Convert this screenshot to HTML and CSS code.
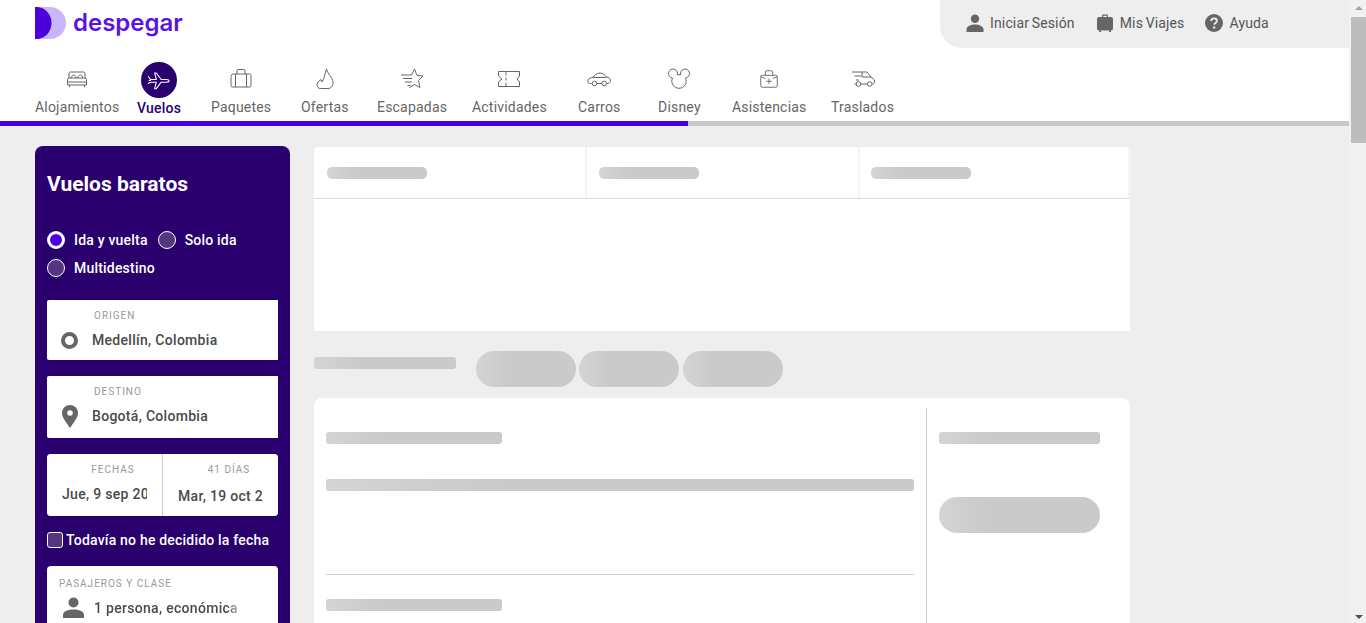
FILE: index.html
```html
<!DOCTYPE html>
<html lang="es">
<head>
    <meta charset="UTF-8">
    <meta name="viewport" content="width=device-width, initial-scale=1.0">
    <title>Vuelos baratos - Despegar</title>
    <link rel="stylesheet" href="styles.css">
</head>
<body>
<div class="page">
    <div class="content">
        <header class="top">
            <div class="logo">
                <svg width="32" height="32" viewBox="0 0 32 32">
                    <path d="M0 0h15a16 16 0 0 1 0 32H0z" fill="#c9b6f8"/>
                    <path d="M0 0h3c8 1 13.500 8 13.500 16S11 31 3 32H0z" fill="#4b00dc"/>
                </svg>
                <span class="logo-text">despegar</span>
            </div>
            <div class="user-menu">
                <a class="user-link">
                    <svg width="18" height="18" viewBox="0 0 18 18" fill="#666"><circle cx="9" cy="4.800" r="4.200"/><path d="M0.500 18v-2.500C0.500 12 5 10.500 9 10.500s8.500 1.500 8.500 5V18z"/></svg>
                    Iniciar Sesión
                </a>
                <a class="user-link">
                    <svg width="18" height="18" viewBox="0 0 18 18" fill="#666"><path d="M6 3V1.500C6 .8 6.500.5 7 .5h4c.5 0 1 .3 1 1V3h-1.200V1.700H7.200V3z"/><rect x="1" y="3" width="16" height="13.500" rx="2"/><path d="M3 16.500h2V18H3zM13 16.500h2V18h-2z"/></svg>
                    Mis Viajes
                </a>
                <a class="user-link">
                    <svg width="18" height="18" viewBox="0 0 18 18"><circle cx="9" cy="9" r="9" fill="#666"/><path d="M6.200 7c0-1.700 1.300-2.700 2.900-2.700 1.500 0 2.800.9 2.800 2.400 0 2.200-2.600 2.200-2.600 4" fill="none" stroke="#eee" stroke-width="1.800"/><circle cx="9.200" cy="13.400" r="1.200" fill="#eee"/></svg>
                    Ayuda
                </a>
            </div>
        </header>

        <nav class="products">
            <a class="product">
                <span class="product-icon">
                    <svg width="24" height="24" viewBox="0 0 24 24"><path d="M4 11V6.500A1.500 1.500 0 0 1 5.500 5h13A1.500 1.500 0 0 1 20 6.500V11M2.500 12.500A1.500 1.500 0 0 1 4 11h16a1.500 1.500 0 0 1 1.500 1.500V18h-19zM2.500 15h19M4.500 18v2M19.500 18v2M6.500 11c0-4 4.500-4 4.500 0M13 11c0-4 4.500-4 4.500 0"/></svg>
                </span>
                <span class="product-name">Alojamientos</span>
            </a>
            <a class="product active">
                <span class="product-icon">
                    <svg width="26" height="26" viewBox="0 0 24 24"><path d="M2 8.500l2 3h5.500L8 5.500h1.500l4.500 6h5c3 0 3 2.500 0 2.500h-5L9.500 20H8l1.500-6H4l-2 1.500M2.500 12.500h2"/></svg>
                </span>
                <span class="product-name">Vuelos</span>
            </a>
            <a class="product">
                <span class="product-icon">
                    <svg width="24" height="24" viewBox="0 0 24 24"><path d="M4 7h16.500A1.500 1.500 0 0 1 22 8.500v10a1.500 1.500 0 0 1-1.500 1.500h-17A1.500 1.500 0 0 1 2 18.500v-9A2.500 2.500 0 0 1 4 7zM8 7V3.500A1 1 0 0 1 9 2.500h6a1 1 0 0 1 1 1V7M6.500 7v13M17.500 7v13"/></svg>
                </span>
                <span class="product-name">Paquetes</span>
            </a>
            <a class="product">
                <span class="product-icon">
                    <svg width="24" height="24" viewBox="0 0 24 24"><path d="M13.500 2c.5 3 2 4.500 3.500 6.500 1.500 2 3 4.500 3 7 0 3.500-2 6-5 6H7.500C5 21.500 4 19.500 4 17.500c0-1 .5-1.500 1-2.500l3-2.500 1 2.500c2.500-3 2.500-8 4.500-13z"/></svg>
                </span>
                <span class="product-name">Ofertas</span>
            </a>
            <a class="product">
                <span class="product-icon">
                    <svg width="24" height="24" viewBox="0 0 24 24"><path d="M1 8h10.500L14.500 2l2.500 6.500 6 .5-4.500 4.500 1.500 7-5.500-3-5 3M3 11.500h9M5 15h7M7.500 18.500h3"/></svg>
                </span>
                <span class="product-name">Escapadas</span>
            </a>
            <a class="product">
                <span class="product-icon">
                    <svg width="24" height="24" viewBox="0 0 24 24"><path d="M1.500 4.500h21v4.500l-2.500 3 2.500 3v4.500h-21V15L5 12 1.500 9zM9 4.500v4M9 10.500v3M9 15.500v4"/></svg>
                </span>
                <span class="product-name">Actividades</span>
            </a>
            <a class="product">
                <span class="product-icon">
                    <svg width="24" height="24" viewBox="0 0 24 24"><path d="M4.500 16.500H2.500C1 16.500.5 14.500 1 13c.5-1.500 3-2.500 4.500-2.500C7.500 8.500 9.500 6 13 6c3 0 5 2 6.500 4 2 .5 4 1.500 4 3 0 1.500-1 3.500-2.500 3.500h-1M10 16.500h5M5.500 10.500h14"/><circle cx="7.500" cy="16.500" r="2.300"/><circle cx="17.200" cy="16.500" r="2.300"/></svg>
                </span>
                <span class="product-name">Carros</span>
            </a>
            <a class="product">
                <span class="product-icon">
                    <svg width="24" height="24" viewBox="0 0 24 24"><path d="M5.500 11A4.500 4.500 0 1 1 10.300 7.800 7 7 0 0 1 13.700 7.800 4.500 4.500 0 1 1 18.500 11 7.200 7.200 0 1 1 5.500 11z"/></svg>
                </span>
                <span class="product-name">Disney</span>
            </a>
            <a class="product">
                <span class="product-icon">
                    <svg width="22" height="22" viewBox="0 0 24 24"><path d="M4.500 8h15A1.500 1.500 0 0 1 21 9.500v10a1.500 1.500 0 0 1-1.500 1.500h-15A1.500 1.500 0 0 1 3 19.500v-10A1.500 1.500 0 0 1 4.500 8zM8 8V4.500A1.500 1.500 0 0 1 9.500 3h5A1.500 1.500 0 0 1 16 4.500V8M12 11.500v6M9 14.500h6M3 9.500l5 2M21 9.500l-5 2"/></svg>
                </span>
                <span class="product-name">Asistencias</span>
            </a>
            <a class="product">
                <span class="product-icon">
                    <svg width="24" height="24" viewBox="0 0 24 24"><path d="M1 5h15l4 5 3.500 3v2.500c0 1-1 1.500-2 1.500M5 17H3.500M10 17h7M3.500 9H10M5 13h3M11 5v5h9"/><circle cx="7.500" cy="17" r="2.300"/><circle cx="18.800" cy="17" r="2.300"/></svg>
                </span>
                <span class="product-name">Traslados</span>
            </a>
        </nav>
        <div class="progress"><div class="progress-fill"></div></div>

        <main class="main">
            <aside class="search">
                <h2 class="search-title">Vuelos baratos</h2>

                <div class="radio-row">
                    <span class="radio checked"></span><span class="radio-label">Ida y vuelta</span>
                    <span class="radio"></span><span class="radio-label">Solo ida</span>
                </div>
                <div class="radio-row second">
                    <span class="radio"></span><span class="radio-label">Multidestino</span>
                </div>

                <div class="field origin">
                    <div class="field-label">ORIGEN</div>
                    <div class="field-row">
                        <span class="field-icon"><span class="ring"></span></span>
                        <span class="field-value">Medellín, Colombia</span>
                    </div>
                </div>

                <div class="field dest">
                    <div class="field-label">DESTINO</div>
                    <div class="field-row">
                        <span class="field-icon">
                            <svg width="16" height="23" viewBox="0 0 16 23"><path fill="#666" fill-rule="evenodd" d="M8 0a8 8 0 0 1 8 8c0 5-5 10-8 15C5 18 0 13 0 8a8 8 0 0 1 8-8zm0 5.200a2.800 2.800 0 1 0 0 5.600 2.800 2.800 0 0 0 0-5.600z"/></svg>
                        </span>
                        <span class="field-value">Bogotá, Colombia</span>
                    </div>
                </div>

                <div class="dates">
                    <div class="date">
                        <div class="date-label">FECHAS</div>
                        <div class="date-value">Jue, 9 sep 2021</div>
                    </div>
                    <div class="date">
                        <div class="date-label">41 DÍAS</div>
                        <div class="date-value lower">Mar, 19 oct 2021</div>
                    </div>
                </div>

                <div class="no-date">
                    <span class="checkbox"></span>
                    <span class="no-date-label">Todavía no he decidido la fecha</span>
                </div>

                <div class="passengers">
                    <div class="passengers-label">PASAJEROS Y CLASE</div>
                    <div class="field-row">
                        <svg class="passengers-icon" width="21" height="21" viewBox="0 0 21 21" fill="#666"><circle cx="10.500" cy="5.500" r="5"/><path d="M0 21v-3c0-4 5.500-5.500 10.500-5.500S21 14 21 18v3z"/></svg>
                        <span class="passengers-value">1 persona, económica</span>
                    </div>
                </div>
            </aside>

            <section class="results">
                <div class="tabs-card">
                    <div class="tabs">
                        <div class="tab"><div class="bar tab-bar"></div></div>
                        <div class="tab"><div class="bar tab-bar"></div></div>
                        <div class="tab"><div class="bar tab-bar"></div></div>
                    </div>
                </div>

                <div class="filters">
                    <div class="bar filters-title"></div>
                    <div class="bar pill"></div>
                    <div class="bar pill"></div>
                    <div class="bar pill"></div>
                </div>

                <div class="result-card">
                    <div class="result-left">
                        <div class="bar short"></div>
                        <div class="bar full"></div>
                        <hr class="result-line">
                        <div class="bar short"></div>
                    </div>
                    <div class="result-right">
                        <div class="bar price"></div>
                        <div class="bar buy"></div>
                    </div>
                </div>
            </section>
        </main>
    </div>

    <div class="scrollbar">
        <span class="arrow-up"></span>
        <div class="thumb"></div>
        <span class="arrow-down"></span>
    </div>
</div>
</body>
</html>
```

FILE: styles.css
```css
:root {
    --purple: #4b00dc;
    --dark-purple: #29006e;
    --bg-color: #eeeeee;
    --skeleton: #cacaca;
    --text-color: #555;
}

* {
    box-sizing: border-box;
}

body {
    margin: 0;
    font-family: 'Roboto', 'Liberation Sans', sans-serif;
    color: var(--text-color);
    background-color: var(--bg-color);
}

.page {
    display: flex;
    height: 100vh;
    overflow: hidden;
}

.content {
    flex: 1;
    min-width: 0;
}

/* header */
.top {
    display: flex;
    justify-content: space-between;
    height: 48px;
    background-color: white;
}

.logo {
    display: flex;
    gap: 6px;
    padding: 7px 0 0 35px;
    height: 39px;
}

.logo-text {
    font-family: 'Inter', sans-serif;
    font-size: 24px;
    font-weight: 600;
    line-height: 31px;
    color: #5a12e6;
}

.user-menu {
    display: flex;
    align-items: center;
    gap: 21px;
    width: 409px;
    padding: 0 0 2px 26px;
    background-color: var(--bg-color);
    border-bottom-left-radius: 22px;
}

.user-link {
    display: flex;
    align-items: center;
    gap: 6px;
    font-size: 14px;
    letter-spacing: 0.15px;
    word-spacing: -1px;
}

/* product nav */
.products {
    display: grid;
    grid-template-columns: 102px 74px 90px 76px 95px 106px 80px 74px 99px 61px;
    justify-items: start;
    height: 73px;
    padding: 14px 0 0 35px;
    background-color: white;
}

.product {
    display: flex;
    flex-direction: column;
    align-items: center;
}

.product-icon {
    display: flex;
    align-items: center;
    justify-content: center;
    width: 36px;
    height: 36px;
}

.product-icon svg {
    margin-bottom: 3px;
    fill: none;
    stroke: #666;
    stroke-width: 1;
    stroke-linejoin: round;
}

.product-name {
    font-size: 14px;
    line-height: 18px;
    letter-spacing: 0.2px;
    color: #666;
}

.product.active .product-icon {
    background-color: var(--dark-purple);
    border-radius: 50%;
}

.product.active .product-icon svg {
    margin-bottom: 0;
    stroke: white;
}

.product.active .product-name {
    margin-top: 1px;
    font-weight: 500;
    color: var(--dark-purple);
}

.progress {
    height: 5px;
    background-color: #c9c9c9;
}

.progress-fill {
    width: 51%;
    height: 100%;
    background-color: var(--purple);
}

/* main */
.main {
    display: flex;
    align-items: flex-start;
    gap: 24px;
    padding: 20px 0 0 35px;
}

/* search box */
.search {
    flex: 0 0 255px;
    min-width: 0;
    height: 560px;
    padding: 26px 12px 0;
    background-color: var(--dark-purple);
    border-radius: 8px;
    color: white;
}

.search-title {
    margin: 0 0 35px;
    font-size: 21px;
    font-weight: 700;
    line-height: 24px;
}

.radio-row {
    display: flex;
    align-items: center;
    height: 18px;
}

.radio-row.second {
    margin-top: 10px;
}

.radio {
    flex: none;
    width: 18px;
    height: 18px;
    margin-right: 9px;
    background-color: #54367f;
    border: 1px solid white;
    border-radius: 50%;
}

.radio.checked {
    background-color: var(--purple);
    border-width: 3px;
}

.radio-label {
    margin-right: 10px;
    font-size: 14px;
    font-weight: 500;
    letter-spacing: 0.2px;
}

.field {
    margin-top: 23px;
    height: 60px;
    padding-top: 10px;
    background-color: white;
    border-radius: 2px 0 0 2px;
    color: #4a4a4a;
}

.field.dest {
    margin-top: 16px;
    height: 62px;
}

.field-label {
    padding-left: 47px;
    font-size: 10px;
    line-height: 12px;
    letter-spacing: 1px;
    color: #999;
}

.field-row {
    display: flex;
    align-items: center;
    margin-top: 6px;
}

.field-icon {
    display: flex;
    justify-content: center;
    flex: none;
    width: 45px;
}

.ring {
    width: 17px;
    height: 17px;
    border: 4px solid #666;
    border-radius: 50%;
}

.field-value {
    font-size: 14px;
    font-weight: 500;
    line-height: 24px;
    letter-spacing: 0.3px;
}

.dates {
    display: flex;
    gap: 1px;
    margin-top: 16px;
    height: 62px;
    background-color: #ccc;
    border-radius: 4px;
    overflow: hidden;
}

.date {
    flex: 1;
    min-width: 0;
    padding: 10px 15px 0;
    background-color: white;
    color: #4a4a4a;
}

.date-label {
    padding-left: 17px;
    font-size: 10px;
    line-height: 12px;
    letter-spacing: 1px;
    text-align: center;
    color: #999;
}

.date-value {
    margin-top: 6px;
    font-size: 14px;
    font-weight: 500;
    line-height: 24px;
    letter-spacing: 0.3px;
    white-space: nowrap;
    overflow: hidden;
}

.date-value.lower {
    margin-top: 8px;
}

.no-date {
    display: flex;
    align-items: center;
    gap: 3px;
    margin-top: 16px;
    height: 16px;
}

.checkbox {
    flex: none;
    width: 16px;
    height: 16px;
    background-color: #54367f;
    border: 1px solid white;
    border-radius: 3px;
}

.no-date-label {
    font-size: 14px;
    font-weight: 500;
    letter-spacing: 0.2px;
    white-space: nowrap;
}

.passengers {
    margin-top: 18px;
    height: 80px;
    padding-top: 12px;
    background-color: white;
    border-radius: 4px;
    color: #4a4a4a;
}

.passengers-label {
    padding-left: 12px;
    font-size: 10px;
    line-height: 12px;
    letter-spacing: 1px;
    color: #999;
}

.passengers .field-row {
    margin-top: 7px;
}

.passengers-icon {
    margin: 0 10px 0 16px;
}

.passengers-value {
    font-size: 14px;
    font-weight: 500;
    letter-spacing: 0.3px;
    white-space: nowrap;
    -webkit-mask-image: linear-gradient(90deg, #000 92%, rgba(0, 0, 0, 0.4));
    mask-image: linear-gradient(90deg, #000 92%, rgba(0, 0, 0, 0.4));
}

/* results */
.results {
    flex: 0 0 816px;
    padding-top: 1px;
}

.bar {
    height: 12px;
    background: linear-gradient(90deg, #d4d4d4, var(--skeleton) 30%);
    border-radius: 3px;
}

.tabs-card {
    height: 184px;
    background-color: white;
    border-radius: 4px 4px 0 0;
}

.tabs {
    display: flex;
    height: 52px;
    border-bottom: 1px solid #ddd;
}

.tab {
    flex: 0 0 273px;
    padding: 20px 0 0 13px;
    border-right: 2px solid #f5f5f5;
}

.tab + .tab {
    padding-left: 12px;
}

.tab:last-child {
    flex: 1;
    padding-left: 11px;
}

.tab-bar {
    width: 100px;
    border-radius: 5px;
}

.filters {
    display: flex;
    align-items: center;
    gap: 3px;
    margin-top: 20px;
    height: 36px;
}

.filters-title {
    width: 142px;
    margin: 0 17px 12px 0;
}

.pill {
    width: 100px;
    height: 36px;
    border-radius: 18px;
}

.pill:last-child {
    margin-left: 1px;
}

.result-card {
    display: flex;
    margin-top: 11px;
    height: 300px;
    padding-top: 10px;
    background-color: white;
    border-radius: 8px;
}

.result-left {
    width: 613px;
    padding: 24px 12px 0;
    border-right: 1px solid #ccc;
}

.result-left .full {
    margin-top: 35px;
}

.result-line {
    margin: 83px 0 24px;
    border: none;
    border-top: 1px solid #ccc;
}

.short {
    width: 176px;
}

.result-right {
    width: 161px;
    margin-left: 12px;
    padding-top: 24px;
}

.buy {
    height: 36px;
    margin-top: 53px;
    border-radius: 18px;
}

/* fake page scrollbar */
.scrollbar {
    display: flex;
    flex-direction: column;
    align-items: flex-end;
    flex: 0 0 17px;
    background-color: #f1f1f1;
}

.thumb {
    width: 15px;
    height: 126px;
    background-color: #bcbcbc;
}

.arrow-up, .arrow-down {
    width: 15px;
    height: 17px;
    position: relative;
}

.arrow-up::after, .arrow-down::after {
    content: "";
    position: absolute;
    left: 4px;
    border-left: 4px solid transparent;
    border-right: 4px solid transparent;
}

.arrow-up::after {
    top: 6px;
    border-bottom: 4px solid #a3a3a3;
}

.arrow-down {
    margin-top: auto;
}

.arrow-down::after {
    bottom: 4px;
    border-top: 4px solid #505050;
}
```
